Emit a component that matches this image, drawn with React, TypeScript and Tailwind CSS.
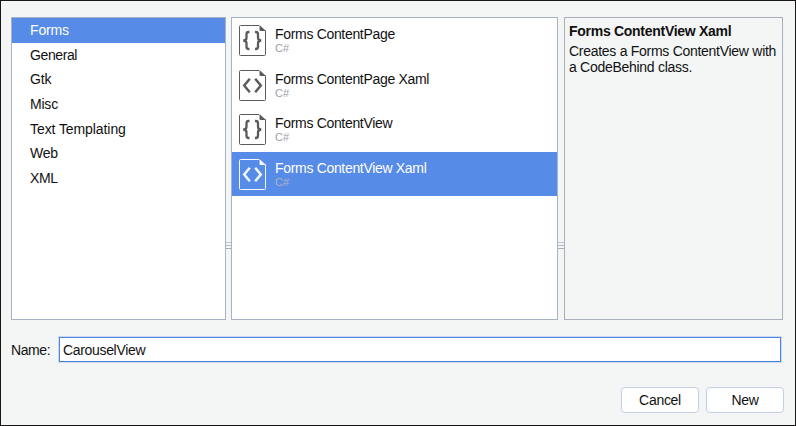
const categories = [
  { name: 'Forms', spacing: 'tracking-[-0.15px]' },
  { name: 'General', spacing: 'tracking-[-0.4px]' },
  { name: 'Gtk', spacing: 'tracking-[-0.1px]' },
  { name: 'Misc', spacing: 'tracking-[-0.2px]' },
  { name: 'Text Templating', spacing: 'tracking-[-0.08px]' },
  { name: 'Web', spacing: 'tracking-[-0.3px]' },
  { name: 'XML', spacing: 'tracking-[-0.4px]' },
];

const templates = [
  { name: 'Forms ContentPage', kind: 'code' },
  { name: 'Forms ContentPage Xaml', kind: 'xaml' },
  { name: 'Forms ContentView', kind: 'code' },
  { name: 'Forms ContentView Xaml', kind: 'xaml' },
];

function FileIcon({ kind, selected }: { kind: string; selected: boolean }) {
  const color = selected ? '#f4f8ff' : '#5a5b5f';
  return (
    <svg width="28" height="32" viewBox="0 0 28 32" fill="none" className="shrink-0">
      <path
        d="M21 1.5H2.5Q1.5 1.5 1.5 2.5V30.5Q1.5 31.5 2.5 31.5H26.5Q27.5 31.5 27.5 30.5V6.5"
        stroke={color}
        strokeWidth="1"
      />
      <path d="M21.5 1L28 7H22.5Q21.5 7 21.5 6Z" fill={color} />
      {kind === 'code' ? (
        <path
          d="M11.5 8H10.7Q8.5 8 8.5 10.3V13.7Q8.5 16.5 5.2 16.5Q8.5 16.5 8.5 19.3V22.7Q8.5 25 10.7 25H11.5M17 8H17.8Q20 8 20 10.3V13.7Q20 16.5 23.3 16.5Q20 16.5 20 19.3V22.7Q20 25 17.8 25H17"
          stroke={color}
          strokeWidth="2.3"
        />
      ) : (
        <path d="M11.8 9.8L6.2 16.5L11.8 23.2M17.2 9.8L22.8 16.5L17.2 23.2" stroke={color} strokeWidth="2.5" />
      )}
    </svg>
  );
}

function Splitter() {
  return (
    <div className="flex flex-col gap-[2px] pt-[225px]">
      <i className="h-px bg-[#bdc5d6]" />
      <i className="h-px bg-[#b3bac9]" />
      <i className="h-px bg-[#a7acb5]" />
    </div>
  );
}

export default function App() {
  return (
    <main className="flex h-[426px] w-[796px] flex-col border border-[#171717] bg-[#f4f6f6] pt-4 pl-[10px] font-['Liberation_Sans',Arial,sans-serif] text-[14px] text-[#111]">
      <div className="grid h-[303px] grid-cols-[215px_5px_327px_6px_219px]">
        <ul className="border border-[#a9b1c4] bg-white">
          {categories.map((c, i) => (
            <li
              key={c.name}
              className={`flex h-[24.6px] items-center pt-px pl-[18px] ${c.spacing} ${i === 0 ? 'bg-[#568be8] text-white' : ''}`}
            >
              {c.name}
            </li>
          ))}
        </ul>
        <Splitter />
        <ul className="border border-[#a9b1c4] bg-white">
          {templates.map((t, i) => (
            <li
              key={t.name}
              className={`flex h-[44.6px] items-start pt-[6px] pl-[6px] ${i === 3 ? 'bg-[#568be8] text-white' : ''}`}
            >
              <FileIcon kind={t.kind} selected={i === 3} />
              <div className="pt-[2px] pl-[9px]">
                <div className="h-[16px] leading-[16px] tracking-[-0.32px] whitespace-nowrap">{t.name}</div>
                <div className={`text-[11px] leading-[12px] ${i === 3 ? 'text-[#afb4c3]' : 'text-[#9b9fac]'}`}>C#</div>
              </div>
            </li>
          ))}
        </ul>
        <Splitter />
        <section className="border border-[#a9b0bd] pt-[4px] pl-[4px]">
          <h2 className="leading-[18px] font-bold tracking-[-0.28px] whitespace-nowrap">Forms ContentView Xaml</h2>
          <p className="mt-[4px] leading-[15.6px] tracking-[-0.28px] whitespace-nowrap">
            Creates a Forms ContentView with
            <br />a CodeBehind class.
          </p>
        </section>
      </div>
      <div className="mt-[17px] flex items-center">
        <label htmlFor="name" className="w-[48px] pt-[2px] tracking-[-0.4px]">Name:</label>
        <input
          id="name"
          defaultValue="CarouselView"
          className="h-[25px] w-[722px] border border-[#4d84e0] bg-white pl-[3px] tracking-[-0.33px] shadow-[0_0_0_1px_#ccd9f0] outline-none"
        />
      </div>
      <div className="mt-[25px] flex gap-[7px] pl-[610px] tracking-[-0.3px]">
        <button className="h-[26px] w-[78px] rounded-[4px] border border-[#c3cfe8] bg-white">Cancel</button>
        <button className="h-[26px] w-[78px] rounded-[4px] border border-[#c3cfe8] bg-white">New</button>
      </div>
    </main>
  );
}
